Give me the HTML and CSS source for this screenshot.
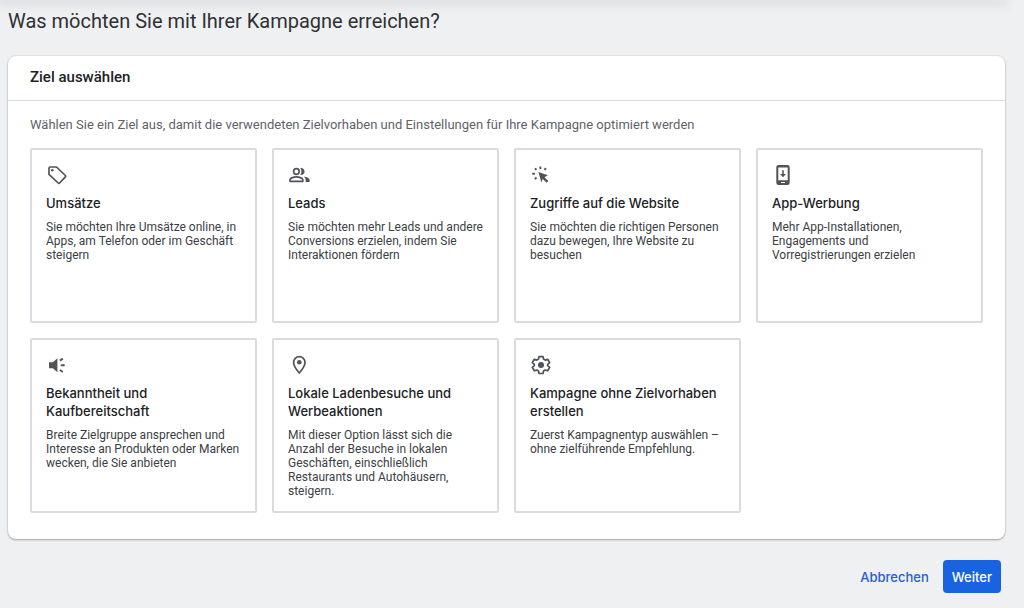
FILE: index.html
```html
<!DOCTYPE html>
<html lang="de">
<head>
<meta charset="utf-8">
<meta name="viewport" content="width=device-width, initial-scale=1">
<title>Neue Kampagne</title>
<link rel="stylesheet" href="styles.css">
</head>
<body>
<div class="top-edge"></div>
<main class="page">
  <h1 class="page-title">Was möchten Sie mit Ihrer Kampagne erreichen?</h1>
  <section class="panel">
    <h2 class="panel-title">Ziel auswählen</h2>
    <div class="panel-body">
      <p class="panel-hint">Wählen Sie ein Ziel aus, damit die verwendeten Zielvorhaben und Einstellungen für Ihre Kampagne optimiert werden</p>
      <div class="goals">
        <button class="goal" type="button">
          <svg class="icon" viewBox="0 0 22 22" aria-hidden="true"><path class="line" d="M4.200 2h6.300l8.900 8.500a1 1 0 0 1 0 1.400l-5.800 6.100a1 1 0 0 1-1.400 0L3 9.400V3.200A1.200 1.200 0 0 1 4.200 2z"/><circle cx="6.300" cy="5.300" r="1.300"/></svg>
          <span class="goal-title">Umsätze</span>
          <span class="goal-text">Sie möchten Ihre Umsätze online, in Apps, am Telefon oder im Geschäft steigern</span>
        </button>
        <button class="goal" type="button">
          <svg class="icon" viewBox="0 0 22 22" aria-hidden="true"><circle class="line" cx="8.4" cy="6.500" r="2.800"/><path class="line" d="M2 16.300v-1.500c0-1.800 4.200-3 6.400-3s6.400 1.200 6.400 3v1.500z"/><path d="M12.300 3c2.300-.4 4.300 1.300 4.300 3.500s-2 3.900-4.300 3.500c1.500-2.100 1.500-4.900 0-7zM15.700 11.600c3.100.4 5.900 1.600 5.900 3.500v2h-4v-2c0-1.400-.7-2.600-1.900-3.500z"/></svg>
          <span class="goal-title">Leads</span>
          <span class="goal-text">Sie möchten mehr Leads und andere Conversions erzielen, indem Sie Interaktionen fördern</span>
        </button>
        <button class="goal" type="button">
          <svg class="icon" viewBox="0 0 22 22" aria-hidden="true"><path d="M8.400 6.900l9.500 3.400-3.400 2 3.800 3.800-1.700 1.700-3.800-3.800-1.500 3.200z"/><path class="ray thick" d="M10.400 1.500v2.400M5.100 3.200l1.200 1.800M15.900 3.100l-1.400 1.900M2.300 8.700h2.600M6.400 12.400l-1.400 1.900"/></svg>
          <span class="goal-title">Zugriffe auf die Website</span>
          <span class="goal-text">Sie möchten die richtigen Personen dazu bewegen, Ihre Website zu besuchen</span>
        </button>
        <button class="goal" type="button">
          <svg class="icon" viewBox="0 0 22 22" aria-hidden="true"><path fill-rule="evenodd" d="M6.500 0h9a2.200 2.200 0 0 1 2.200 2.200v15.600a2.200 2.200 0 0 1-2.200 2.200h-9a2.200 2.200 0 0 1-2.200-2.200V2.200A2.200 2.200 0 0 1 6.500 0zM6.300 2.500v12.700h9.400V2.500zM9 17v1h4v-1z"/><path d="M10.200 5.200h1.600V9H14l-3 3.200L8 9h2.200z"/></svg>
          <span class="goal-title">App-Werbung</span>
          <span class="goal-text">Mehr App-Installationen, Engagements und Vorregistrierungen erzielen</span>
        </button>
        <button class="goal" type="button">
          <svg class="icon" viewBox="0 0 22 22" aria-hidden="true"><path d="M3 7.300h3.800l4.600-4v14l-4.600-4H3z"/><path class="ray thick" d="M13.900 5.600l2.900-2M14.800 10.300h3.900M13.900 15l2.900 2"/></svg>
          <span class="goal-title">Bekanntheit und Kaufbereitschaft</span>
          <span class="goal-text">Breite Zielgruppe ansprechen und Interesse an Produkten oder Marken wecken, die Sie anbieten</span>
        </button>
        <button class="goal" type="button">
          <svg class="icon" viewBox="0 0 22 22" aria-hidden="true"><path class="line" d="M11.300 1.700A5.700 5.700 0 0 1 17 7.400c0 3.900-5.700 10.600-5.700 10.600S5.600 11.300 5.600 7.400a5.700 5.700 0 0 1 5.700-5.700z"/><circle cx="11.300" cy="7.300" r="2.300"/></svg>
          <span class="goal-title">Lokale Ladenbesuche und Werbeaktionen</span>
          <span class="goal-text">Mit dieser Option lässt sich die Anzahl der Besuche in lokalen Geschäften, einschließlich Restaurants und Autohäusern, steigern.</span>
        </button>
        <button class="goal" type="button">
          <svg class="icon" viewBox="0 1 22 22" aria-hidden="true"><path class="line" d="M9 2.600h4l.5 2.500 1.700 1 2.500-.8 2 3.400-2 1.700v1.300l2 1.700-2 3.400-2.500-.8-1.700 1-.5 2.500H9l-.5-2.500-1.700-1-2.500.8-2-3.400 2-1.700v-1.300l-2-1.700 2-3.400 2.500.8 1.700-1z"/><circle cx="11" cy="11" r="3"/></svg>
          <span class="goal-title">Kampagne ohne Zielvorhaben erstellen</span>
          <span class="goal-text">Zuerst Kampagnentyp auswählen – ohne zielführende Empfehlung.</span>
        </button>
      </div>
    </div>
  </section>
  <div class="actions">
    <button class="btn" type="button">Abbrechen</button>
    <button class="btn btn-primary" type="button">Weiter</button>
  </div>
</main>
</body>
</html>
```
FILE: styles.css
```css
* { box-sizing: border-box; }
body {
  margin: 0;
  background: #eff0f2;
  color: #202124;
  font-family: Roboto, "Liberation Sans", sans-serif;
  overflow-x: hidden;
}
.top-edge {
  height: 0;
  margin-right: 19px;
  box-shadow: 0 0 12px 3px rgba(60, 64, 67, 0.16);
}
.page { padding: 9px 19px 14px 8px; }
.page-title {
  margin: 0 0 22px;
  color: #303135;
  font-size: 20px;
  line-height: 25px;
  font-weight: 400;
}
.panel {
  background: #fff;
  border-radius: 8px;
  box-shadow: 0 1px 2px rgba(60, 64, 67, 0.4), 0 0 2px rgba(60, 64, 67, 0.2);
}
.panel-title {
  margin: 0;
  padding: 11px 22px 12px;
  border-bottom: 1px solid #dadce4;
  font-size: 15px;
  line-height: 21px;
  font-weight: 500;
}
.panel-body { padding: 15px 22px 26px; }
.panel-hint {
  margin: 0 0 15px;
  color: #5f6368;
  font-size: 13px;
  line-height: 17px;
}
.goals {
  display: grid;
  grid-template-columns: repeat(4, 1fr);
  grid-auto-rows: minmax(175px, auto);
  gap: 15px;
}
.goal {
  display: flex;
  flex-direction: column;
  align-items: flex-start;
  padding: 15px 12px 10px 14px;
  border: 2px solid #dadae0;
  border-radius: 2px;
  background: #fff;
  color: #3c4043;
  font-family: inherit;
  text-align: left;
  cursor: pointer;
}
.icon {
  width: 22px;
  height: 22px;
  margin-bottom: 7px;
  fill: #505459;
}
.line { fill: none; stroke: #505459; stroke-width: 1.7; stroke-linejoin: round; }
.ray { fill: none; stroke: #505459; stroke-width: 1.6; }
.thick { stroke-width: 1.9; }
.goal-title {
  margin-bottom: 8px;
  color: #202124;
  font-family: Inter, Roboto, sans-serif;
  font-size: 13px;
  line-height: 18px;
  font-weight: 500;
}
.goal-text { font-size: 12px; line-height: 14px; }
.actions {
  display: flex;
  justify-content: flex-end;
  gap: 5px;
  padding: 21px 4px 0 0;
}
.btn {
  height: 33px;
  padding: 0 9px;
  border: 0;
  border-radius: 4px;
  background: transparent;
  color: #1f5fd0;
  font-family: Inter, Roboto, sans-serif;
  font-size: 13px;
  font-weight: 500;
  cursor: pointer;
}
.btn-primary { background: #1a63e0; color: #fff; }
```
